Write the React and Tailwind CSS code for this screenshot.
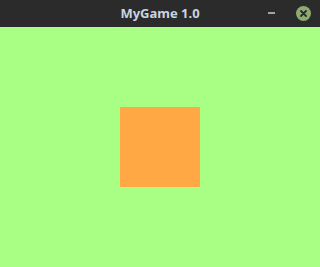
export default function App() {
  return (
    <div className="w-[320px] h-[267px] flex flex-col" style={{ fontFamily: '"Noto Sans", "Open Sans", sans-serif' }}>
      <div className="h-[27px] bg-[#2b2b2b] relative flex items-center justify-center">
        <span className="text-[13px] font-bold text-[#c9d4e2]">MyGame 1.0</span>
        <div className="absolute left-[268px] top-[12px] w-[7px] h-[2px] bg-[#a0a4a8]" />
        <div className="absolute left-[296px] top-[6px] w-[15px] h-[15px] rounded-full bg-[#8daa72] flex items-center justify-center">
          <svg width="9" height="9" viewBox="0 0 9 9">
            <path d="M2 2 L7 7 M7 2 L2 7" stroke="#2b2b2b" strokeWidth="1.8" strokeLinecap="round" />
          </svg>
        </div>
      </div>
      <div className="flex-1 bg-[#a8ff84] flex items-center justify-center">
        <div className="w-[80px] h-[80px] bg-[#ffa844]" />
      </div>
    </div>
  );
}
